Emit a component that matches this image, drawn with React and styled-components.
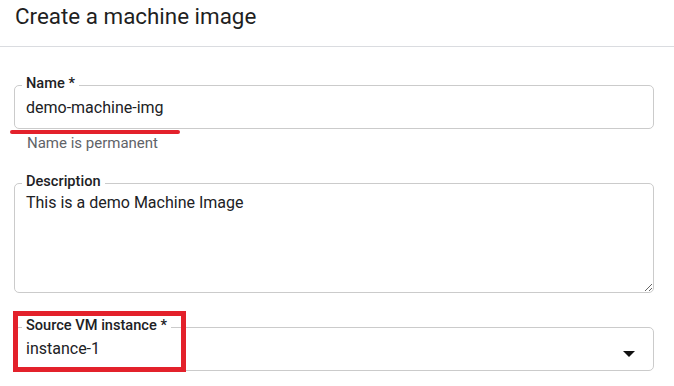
import React from "react"
import styled, { createGlobalStyle } from "styled-components"

const GlobalStyle = createGlobalStyle`
  html, body {
    margin: 0;
    padding: 0;
    background: #fff;
  }
  body {
    font-family: Roboto, "Liberation Sans", Arial, sans-serif;
    color: #202124;
  }
`

const Page = styled.div`
  width: 674px;
  height: 386px;
  overflow: hidden;
  display: flex;
  flex-direction: column;
`

const Header = styled.header`
  height: 47px;
  box-sizing: border-box;
  padding: 2px 15px 0;
  border-bottom: 1px solid #dadce0;
  font-size: 22.4px;
  line-height: 28px;
  font-weight: 400;
  color: #1f1f1f;
`

const Form = styled.form`
  display: flex;
  flex-direction: column;
  padding: 38px 20px 0 14px;
`

const FieldWrap = styled.div`
  position: relative;
  margin-top: ${({ $gap }) => $gap || 0}px;
`

const Box = styled.div`
  box-sizing: border-box;
  height: ${({ $h }) => $h}px;
  border: 1px solid #cbcbcb;
  border-radius: 5px;
  padding: ${({ $pt }) => $pt}px 18px 0 11px;
  display: flex;
  align-items: flex-start;
  justify-content: space-between;
  font-size: 16px;
  line-height: 20px;
  color: #202124;
`

const TextArea = styled.textarea`
  display: block;
  width: 100%;
  box-sizing: border-box;
  height: 110px;
  margin: 0;
  border: 1px solid #cbcbcb;
  border-radius: 5px;
  padding: 9px 11px 0;
  font-family: Roboto, "Liberation Sans", Arial, sans-serif;
  font-size: 16px;
  line-height: 20px;
  color: #202124;
  background: #fff;
  resize: vertical;
  outline: none;
`

const Label = styled.label`
  position: absolute;
  top: -10px;
  left: 8px;
  padding: 0 4px;
  background: #fff;
  font-size: 14.6px;
  line-height: 16px;
  font-weight: 500;
  color: #202124;
`

const Helper = styled.div`
  margin-top: 4px;
  padding-left: 13px;
  font-size: 15px;
  line-height: 20px;
  color: #5f6368;
`

const Arrow = styled.svg`
  align-self: center;
  margin-top: -1px;
  flex-shrink: 0;
`

const Underline = styled.span`
  position: absolute;
  left: -4px;
  top: 45px;
  width: 170px;
  height: 4px;
  border-radius: 2px;
  background: #e3212b;
`

const Highlight = styled.span`
  position: absolute;
  left: -1px;
  top: -16px;
  width: 173px;
  height: 61px;
  box-sizing: border-box;
  border: 5px solid #e3212b;
  pointer-events: none;
`

const App = () => {
  return (
    <>
      <GlobalStyle />
      <Page>
        <Header>Create a machine image</Header>
        <Form onSubmit={(e) => e.preventDefault()}>
          <FieldWrap>
            <Box $h={44} $pt={12}>
              <span>demo-machine-img</span>
            </Box>
            <Label>Name *</Label>
            <Underline />
          </FieldWrap>
          <Helper>Name is permanent</Helper>

          <FieldWrap $gap={30}>
            <TextArea readOnly defaultValue="This is a demo Machine Image" />
            <Label>Description</Label>
          </FieldWrap>

          <FieldWrap $gap={34}>
            <Box $h={44} $pt={11}>
              <span>instance-1</span>
              <Arrow width="12" height="6" viewBox="0 0 12 6">
                <path d="M0 0h12L6 6z" fill="#111" />
              </Arrow>
            </Box>
            <Label>Source VM instance *</Label>
            <Highlight />
          </FieldWrap>
        </Form>
      </Page>
    </>
  )
}

export default App
